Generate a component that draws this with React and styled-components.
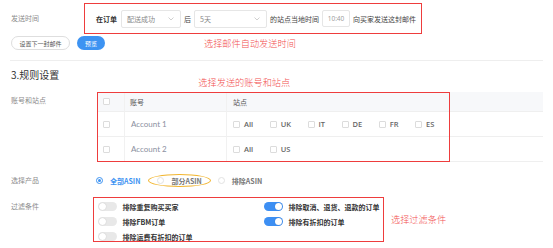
import React from "react";
import styled, { createGlobalStyle } from "styled-components";

const GlobalStyle = createGlobalStyle`
	html, body {
		margin: 0;
		background: #fff;
	}
	body {
		font-family: "Noto Sans CJK SC", "Noto Sans", sans-serif;
		color: #333;
	}
`

const Page = styled.div`
	width: 553px;
	height: 248px;
	box-sizing: border-box;
	padding: 3px 10px 0;
	overflow: hidden;
`

const Row = styled.div`
	display: flex;
	align-items: ${props => props.$top ? "flex-start" : "center"};
	margin-top: ${props => props.$mt || 0}px;
`

const Label = styled.div`
	flex: 0 0 82px;
	padding-left: 1px;
	padding-top: ${props => props.$pt || 0}px;
	font-size: 7px;
	line-height: 9px;
	color: #8c8c8c;
`

const Highlight = styled.div`
	box-sizing: border-box;
	border: 1.5px solid #ee3d3d;
	margin-left: ${props => props.$ml || 0}px;
	width: ${props => props.$w}px;
	height: ${props => props.$h ? `${props.$h}px` : "auto"};
`

const SendLine = styled.div`
	display: flex;
	align-items: center;
	height: 100%;
	padding-left: 11px;
	font-size: 7px;
	color: #444;
	gap: 2px;
	span {
		white-space: nowrap;
	}
`

const Strong = styled.span`
	font-weight: 600;
	color: #333;
	margin-right: 1px;
`

const SelectBox = styled.div`
	box-sizing: border-box;
	width: ${props => props.$w}px;
	height: 18px;
	border: 1px solid #e6e6e6;
	border-radius: 2px;
	display: flex;
	align-items: center;
	justify-content: space-between;
	padding: 0 6px 0 5px;
	margin: 0 1px;
	color: #888;
	font-size: 7px;
`

const TimeBox = styled.div`
	box-sizing: border-box;
	width: 28px;
	height: 17px;
	border: 1px solid #e6e6e6;
	border-radius: 2px;
	display: grid;
	place-items: center;
	margin: 0 1px;
	color: #999;
	font-family: "Open Sans", sans-serif;
	font-size: 6.5px;
`

const Chevron = () => (
	<svg width="6" height="4" viewBox="0 0 6 4">
		<path d="M0.5 0.5 L3 3 L5.5 0.5" fill="none" stroke="#c4c4c4" strokeWidth="0.8" />
	</svg>
)

const Select = ({ value, w }) => (
	<SelectBox $w={w}>
		<span>{value}</span>
		<Chevron />
	</SelectBox>
)

const ButtonRow = styled.div`
	display: flex;
	align-items: center;
	margin-top: 2px;
	padding-left: 1px;
	gap: 7px;
`

const Btn = styled.div`
	box-sizing: border-box;
	height: 14px;
	width: ${props => props.$w}px;
	border-radius: 1000px;
	display: grid;
	place-items: center;
	font-size: 6px;
	background: ${props => props.$primary ? "#3d93f2" : "#fff"};
	color: ${props => props.$primary ? "#fff" : "#555"};
	border: ${props => props.$primary ? "none" : "1px solid #dedede"};
`

const Note = styled.div`
	color: #f24f4f;
	font-size: 9.2px;
	line-height: 11px;
	font-weight: 300;
	white-space: nowrap;
	margin-left: ${props => props.$ml || 0}px;
	margin-bottom: ${props => props.$mb || 0}px;
`

const Divider = styled.div`
	height: 1px;
	background: #eeeeee;
	margin-top: 10px;
	width: 533px;
`

const HeadingRow = styled.div`
	display: flex;
	align-items: flex-end;
	margin-top: 8px;
	padding-left: 1px;
`

const Heading = styled.h3`
	margin: 0 0 7px;
	font-size: 10px;
	line-height: 12px;
	font-weight: 400;
	color: #333;
`

const TableWrap = styled.div`
	position: relative;
	margin-left: 4px;
	width: 446px;
`

const TableHighlight = styled.div`
	position: absolute;
	left: 0;
	top: 0;
	bottom: 0;
	width: 353px;
	border: 1.5px solid #ee3d3d;
	box-sizing: border-box;
	pointer-events: none;
`

const Grid = styled.div`
	display: grid;
	grid-template-columns: 28px 102px 1fr;
	grid-template-rows: 20px 25px 25px;
`

const Cell = styled.div`
	display: flex;
	align-items: center;
	gap: 16.5px;
	padding-left: ${props => props.$pl || 6}px;
	background: ${props => props.$head ? "#f7f8fa" : "#fff"};
	border-bottom: 1px solid #efefef;
	border-right: ${props => props.$last ? "none" : "1px solid #f1f1f1"};
	font-size: 7px;
	color: ${props => props.$head ? "#555" : "#8a8fa0"};
	font-family: ${props => props.$latin ? `"Lato", "Open Sans", sans-serif` : "inherit"};
	${props => props.$latin && "font-size: 8px;"}
`

const Check = styled.span`
	box-sizing: border-box;
	display: inline-block;
	width: 7px;
	height: 7px;
	border: 1px solid #dcdcdc;
	border-radius: 1px;
	background: #fff;
	flex: none;
`

const Site = styled.span`
	display: inline-flex;
	align-items: center;
	gap: 4px;
	font-family: "Open Sans", sans-serif;
	font-weight: 600;
	font-size: 7.5px;
	color: #666;
`

const RadioGroup = styled.div`
	display: flex;
	align-items: center;
	margin-left: 3px;
	height: 13px;
`

const RadioItem = styled.div`
	box-sizing: border-box;
	display: flex;
	align-items: center;
	gap: 4px;
	height: 13px;
	font-size: 7px;
	font-weight: 600;
	color: ${props => props.$checked ? "#3d93f2" : "#777"};
	padding: ${props => props.$circled ? "0 8px 0 8px" : "0"};
	margin-right: ${props => props.$circled ? 7 : 8}px;
	border: ${props => props.$circled ? "1.5px solid #f2b630" : "none"};
	border-radius: 50%;
`

const Dot = styled.span`
	box-sizing: border-box;
	width: 7px;
	height: 7px;
	border-radius: 50%;
	border: 1px solid ${props => props.$checked ? "#3d93f2" : "#e2e2e2"};
	display: grid;
	place-items: center;
	margin-right: 3px;
	&::after {
		content: "";
		width: 3px;
		height: 3px;
		border-radius: 50%;
		background: ${props => props.$checked ? "#3d93f2" : "transparent"};
	}
`

const FilterRow = styled.div`
	display: flex;
	align-items: center;
	gap: 7px;
`

const FilterBox = styled.div`
	box-sizing: border-box;
	width: 291px;
	border: 1.5px solid #ee3d3d;
	padding: 4px 0 0 3.5px;
	display: grid;
	grid-template-columns: 166px 1fr;
	grid-auto-rows: 9px;
	row-gap: 6px;
`

const SwitchItem = styled.div`
	display: flex;
	align-items: center;
	gap: 6px;
	font-size: 7px;
	font-weight: 600;
	color: #333;
	white-space: nowrap;
`

const Track = styled.span`
	position: relative;
	width: 19px;
	height: 9px;
	border-radius: 10px;
	background: ${props => props.$on ? "#3d8ff3" : "#e8e8e8"};
	flex: none;
	&::after {
		content: "";
		position: absolute;
		top: 1px;
		left: ${props => props.$on ? "11px" : "1px"};
		width: 7px;
		height: 7px;
		border-radius: 50%;
		background: #fff;
		box-shadow: 0 0 1px rgba(0, 0, 0, 0.25);
	}
`

const Toggle = ({ on, children }) => (
	<SwitchItem>
		<Track $on={on} />
		<span>{children}</span>
	</SwitchItem>
)

const accounts = [
	{ name: "Account 1", sites: ["All", "UK", "IT", "DE", "FR", "ES"] },
	{ name: "Account 2", sites: ["All", "US"] },
]

const App = () => {
	return (
		<>
			<GlobalStyle />
			<Page>
				<Row>
					<Label>发送时间</Label>
					<Highlight $ml={-9} $w={338} $h={31}>
						<SendLine>
							<Strong>在订单</Strong>
							<Select value="配送成功" w={60} />
							<span>后</span>
							<Select value="5天" w={73} />
							<span>的站点当地时间</span>
							<TimeBox>10:40</TimeBox>
							<span>向买家发送这封邮件</span>
						</SendLine>
					</Highlight>
				</Row>
				<ButtonRow>
					<Btn $w={59}>设置下一封邮件</Btn>
					<Btn $w={28} $primary>预览</Btn>
					<Note $ml={92}>选择邮件自动发送时间</Note>
				</ButtonRow>
				<Divider />
				<HeadingRow>
					<Heading>3.规则设置</Heading>
					<Note $ml={139}>选择发送的账号和站点</Note>
				</HeadingRow>
				<Row $top $mt={4}>
					<Label $pt={4}>账号和站点</Label>
					<TableWrap>
						<Grid>
							<Cell $head><Check /></Cell>
							<Cell $head $pl={5}>账号</Cell>
							<Cell $head $last>站点</Cell>
							{accounts.map(acc => (
								<React.Fragment key={acc.name}>
									<Cell><Check /></Cell>
									<Cell $pl={6} $latin>{acc.name}</Cell>
									<Cell $last>
										{acc.sites.map(s => (
											<Site key={s}><Check />{s}</Site>
										))}
									</Cell>
								</React.Fragment>
							))}
						</Grid>
						<TableHighlight />
					</TableWrap>
				</Row>
				<Row $mt={12}>
					<Label>选择产品</Label>
					<RadioGroup>
						<RadioItem $checked><Dot $checked />全部ASIN</RadioItem>
						<RadioItem $circled><Dot />部分ASIN</RadioItem>
						<RadioItem><Dot />排除ASIN</RadioItem>
					</RadioGroup>
				</Row>
				<Row $top $mt={10}>
					<Label $pt={5}>过滤条件</Label>
					<FilterRow>
						<FilterBox>
							<Toggle>排除重复购买买家</Toggle>
							<Toggle on>排除取消、退货、退款的订单</Toggle>
							<Toggle>排除FBM订单</Toggle>
							<Toggle on>排除有折扣的订单</Toggle>
							<Toggle>排除运费有折扣的订单</Toggle>
						</FilterBox>
						<Note>选择过滤条件</Note>
					</FilterRow>
				</Row>
			</Page>
		</>
	)
}

export default App
